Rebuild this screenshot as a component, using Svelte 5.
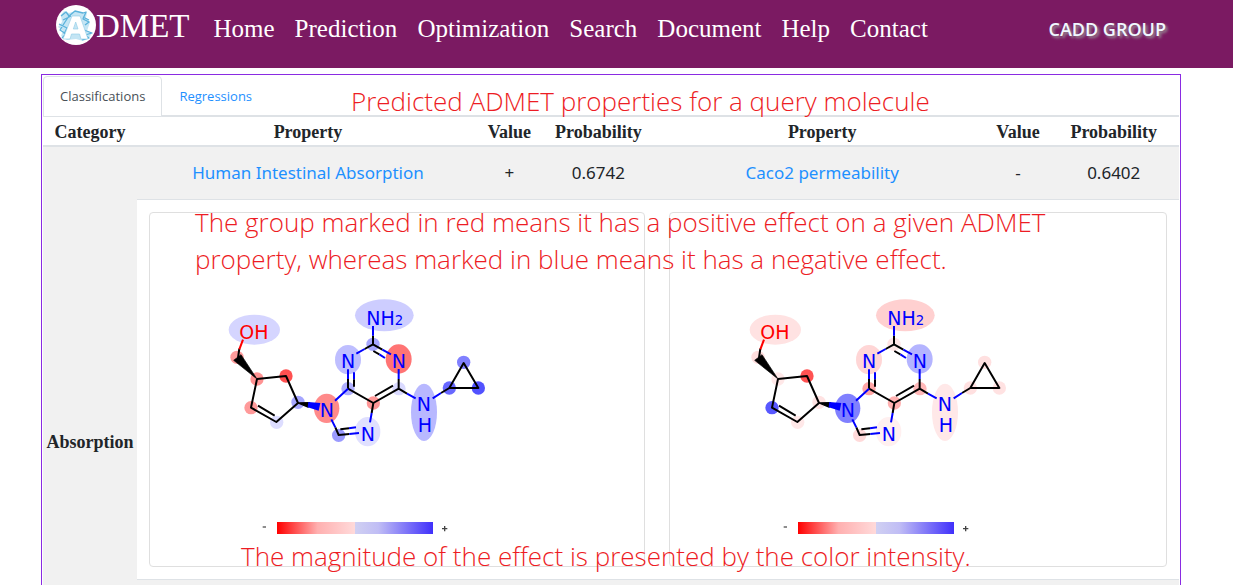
<script>
  const nav = ['Home', 'Prediction', 'Optimization', 'Search', 'Document', 'Help', 'Contact'];

  const R = '#f00';
  const B = '#00f';

  // Atom highlights: x, y, rx, ry; colours are listed per molecule in the same order.
  const spots = [
    [103, 119, 77, 45], [51, 202, 20, 20], [111, 267, 20, 20], [198, 258, 20, 20],
    [93, 353, 20, 20], [170, 397, 20, 20], [234, 337, 20, 20], [320, 355, 38, 44],
    [356, 436, 20, 20], [443, 425, 38, 44], [460, 339, 20, 20], [384, 296, 20, 20],
    [384, 209, 39, 44], [459, 163, 20, 20], [493, 76, 88, 48], [536, 207, 39, 44],
    [537, 296, 20, 20], [612, 367, 39, 86], [688, 294, 20, 20], [731, 217, 20, 20],
    [775, 294, 20, 20]
  ];

  const molecules = [
    {
      name: 'Human Intestinal Absorption',
      value: '+',
      probability: '0.6742',
      colors: ['#d5d5ff', '#ff9c9c', '#ff9393', '#ff5050', '#ff9a9a', '#ddddff', '#a6a6ff', '#ff8a8a', '#9a9aff', '#e0e0ff', '#ff9696', '#b0b0ff', '#bebeff', '#a6a6ff', '#cdcdff', '#ff7474', '#dadaff', '#b8b8ff', '#6868ff', '#8080ff', '#5252ff']
    },
    {
      name: 'Caco2 permeability',
      value: '-',
      probability: '0.6402',
      colors: ['#ffe2e2', '#ffdede', '#ffe8e8', '#ff5252', '#5858ff', '#ffe8e8', '#ffe2e2', '#8080ff', '#ffdada', '#fff0f0', '#ffb0b0', '#ffa6a6', '#ffd6d6', '#ffe4e4', '#ffd0d0', '#b4b4ff', '#ffb8b8', '#ffe8e8', '#ffe0e0', '#ffe0e0', '#ffe2e2']
    }
  ];

  const black = 'M54 204L58 176M111 267L198 258L234 339L169 396L93 353L111 267M164 377L114 347M346 412L356 435L388 432M361 418L387 415M384 296L460 339L455 369M460 339L536 296M465 318L519 287M384 296L384 267M402 290L402 268M459 163L434 177M459 163L459 137M459 163L487 179M460 183L478 193M536 296L536 267M536 296L561 311M663 309L688 294M688 294L731 219L775 294Z';
  const red = 'M58 178L69 149';
  const blue = 'M384 296L345 332M334 388L346 412M388 432L417 429M387 415L408 412M455 369L450 397M384 267L384 238M402 268L402 247M434 177L409 191M459 137L459 108M487 179L513 193M478 193L495 204M536 267L536 237M561 311L587 325M638 325L663 309';
</script>

<header>
  <a class="brand" href="#home" aria-label="ADMET home">
    <svg viewBox="0 0 40 40" aria-hidden="true">
      <circle cx="20" cy="20" r="20" fill="#fff" />
      <path d="M5 10L8 6L13 8L19 6L27 8L31 7L30 13L34 17L31 26L36 28L33 33L27 36L20 34L11 35L5 31L7 26L2 22L6 17Z" fill="#c4e5f4" />
      <path d="M5 11L10 7L13 11L9 17L4 25L10 29L6 33M13 11L19 6L27 8L30 7L27 14L33 17L29 20M7 15L15 11M27 12L33 15M3 19L11 23L8 29M28 25L36 28L29 30L33 33L26 35" fill="none" stroke="#5ab2db" stroke-width="1.3" stroke-linejoin="round" />
      <path d="M7 34L16 11H24L32 34H25L23.500 29H15.500L14 34ZM17.300 24H22L19.700 17Z" fill="#fff" fill-rule="evenodd" stroke="#8fcbe5" stroke-width=".6" />
    </svg>
    <span>DMET</span>
  </a>
  <nav>
    {#each nav as item}
      <a href={'#' + item.toLowerCase()}>{item}</a>
    {/each}
  </nav>
  <a class="group" href="#group">CADD GROUP</a>
</header>

<div class="page">
  <main>
    <div class="tabs">
      <button class="active">Classifications</button>
      <button>Regressions</button>
    </div>
    <table>
      <colgroup>
        <col class="c-cat" /><col class="c-prop1" /><col class="c-val" /><col class="c-prob1" />
        <col class="c-prop2" /><col class="c-val" /><col />
      </colgroup>
      <thead>
        <tr>
          <th>Category</th>
          {#each molecules as _}
            <th>Property</th><th>Value</th><th>Probability</th>
          {/each}
        </tr>
      </thead>
      <tbody>
        <tr class="values">
          <th class="category" rowspan="3">Absorption</th>
          {#each molecules as m}
            <td><a href="#property">{m.name}</a></td><td>{m.value}</td><td>{m.probability}</td>
          {/each}
        </tr>
        <tr class="pictures">
          {#each molecules as m}
            <td colspan="3">
              <div class="card">
                <svg viewBox="0 0 1062 750" role="img" aria-label={m.name}>
                  {#each spots as [x, y, rx, ry], i}
                    <ellipse cx={x} cy={y} {rx} {ry} fill={m.colors[i]} />
                  {/each}
                  <g fill="none" stroke-width="6" stroke-linejoin="round">
                    <path d={black} stroke="#000" />
                    <path d={red} stroke={R} />
                    <path d={blue} stroke={B} />
                  </g>
                  <path d="M111 267L63 194L41 211Z" stroke="#000" stroke-width="2" />
                  <path d="M234 339L268 338L264 351Z" stroke="#000" stroke-width="4" />
                  <path d="M265 336L301 339L296 362L263 352Z" fill={B} />
                  <g class="atoms" fill={B}>
                    <text x="58" y="147" fill={R}>OH</text>
                    <text x="439" y="104">NH<tspan class="sub">2</tspan></text>
                    <text x="363" y="235">N</text>
                    <text x="515" y="235">N</text>
                    <text x="299" y="382">N</text>
                    <text x="422" y="452">N</text>
                    <text x="590" y="364">N</text>
                    <text x="593" y="425">H</text>
                  </g>
                  <defs>
                    <linearGradient id="scale">
                      <stop offset="0" stop-color="#f00" /><stop offset=".26" stop-color="#ffb0b0" />
                      <stop offset=".5" stop-color="#ffdada" /><stop offset=".5" stop-color="#d0d0f2" />
                      <stop offset=".65" stop-color="#c0bdf5" /><stop offset="1" stop-color="#4030fb" />
                    </linearGradient>
                  </defs>
                  <rect x="171" y="696" width="468" height="36" fill="url(#scale)" />
                  <path d="M128 711H138" stroke="#777" stroke-width="5" />
                  <path d="M666 716H682M674 708V724" stroke="#444" stroke-width="4" />
                </svg>
              </div>
            </td>
          {/each}
        </tr>
        <tr class="next"><td colspan="6"></td></tr>
      </tbody>
    </table>
    <p class="note title">Predicted ADMET properties for a query molecule</p>
    <p class="note effect">The group marked in red means it has a positive effect on a given ADMET<br />property, whereas marked in blue means it has a negative effect.</p>
    <p class="note magnitude">The magnitude of the effect is presented by the color intensity.</p>
  </main>
</div>

<style>
  :global(body) { background: #fff; overflow: hidden; }
  a { text-decoration: none; color: #1e90ff; }
  header {
    display: flex;
    align-items: flex-start;
    height: 68px;
    padding: 0 67px 0 56px;
    box-sizing: border-box;
    background: #7b1a62;
    font-family: "Liberation Serif", serif;
  }
  header a { color: #fff; white-space: nowrap; }
  .brand { display: flex; margin-right: 24px; font-size: 33px; line-height: 52px; }
  .brand svg { width: 40px; height: 40px; margin-top: 5px; }
  nav { display: flex; flex: 1; gap: 20px; font-size: 25px; line-height: 58px; }
  .group {
    font: 600 18px/58px "Open Sans", sans-serif;
    color: #f0f8ff;
    text-shadow: 2px 2px 3px #999;
  }
  .page { padding: 6px 11px 0 0; }
  main {
    position: relative;
    max-width: 1140px;
    box-sizing: border-box;
    margin: 0 auto;
    border: 1px solid #8a2be2;
    padding: 1px;
  }
  .tabs { display: flex; height: 41px; box-sizing: border-box; border-bottom: 2px solid #dee2e6; }
  .tabs button {
    height: 41px;
    padding: 0 16px 2px;
    border: 1px solid transparent;
    border-radius: 4px 4px 0 0;
    background: none;
    color: #1e90ff;
    font: 13px "Open Sans", sans-serif;
  }
  .tabs .active { background: #fff; border-color: #dee2e6; color: #495057; }
  table { width: 100%; table-layout: fixed; border-collapse: separate; border-spacing: 0; color: #212529; }
  .c-cat { width: 94px; }
  .c-prop1 { width: 30.1%; }
  .c-val { width: 61px; }
  .c-prob1 { width: 117px; }
  .c-prop2 { width: 29.1%; }
  th, td { padding: 0; text-align: center; }
  th { font: bold 18px/26px "Liberation Serif", serif; }
  thead th { padding-top: 2px; border-bottom: 2px solid #dee2e6; }
  .category, .values td, .next td { background: #f1f1f1; }
  .values td { height: 50px; padding-bottom: 2px; border-bottom: 1px solid #dee2e6; font: 17px "Noto Sans", sans-serif; }
  .pictures td { padding: 12px; border-bottom: 1px solid #dee2e6; }
  .next td { height: 156px; }
  .card { height: 353px; display: flex; justify-content: center; border: 1px solid #dfdfdf; border-radius: 4px; }
  .card svg { width: 354px; height: 250px; margin-top: 77px; }
  .atoms { font: 57px "DejaVu Sans", sans-serif; }
  .sub { font-size: 40px; }
  .note {
    position: absolute;
    margin: 0;
    color: #ed1c24;
    font: 300 26px/37px "Open Sans", sans-serif;
    white-space: nowrap;
  }
  .title { left: 309px; top: 8px; }
  .effect { left: 153px; top: 129px; }
  .magnitude { left: 199px; top: 463px; }
</style>
